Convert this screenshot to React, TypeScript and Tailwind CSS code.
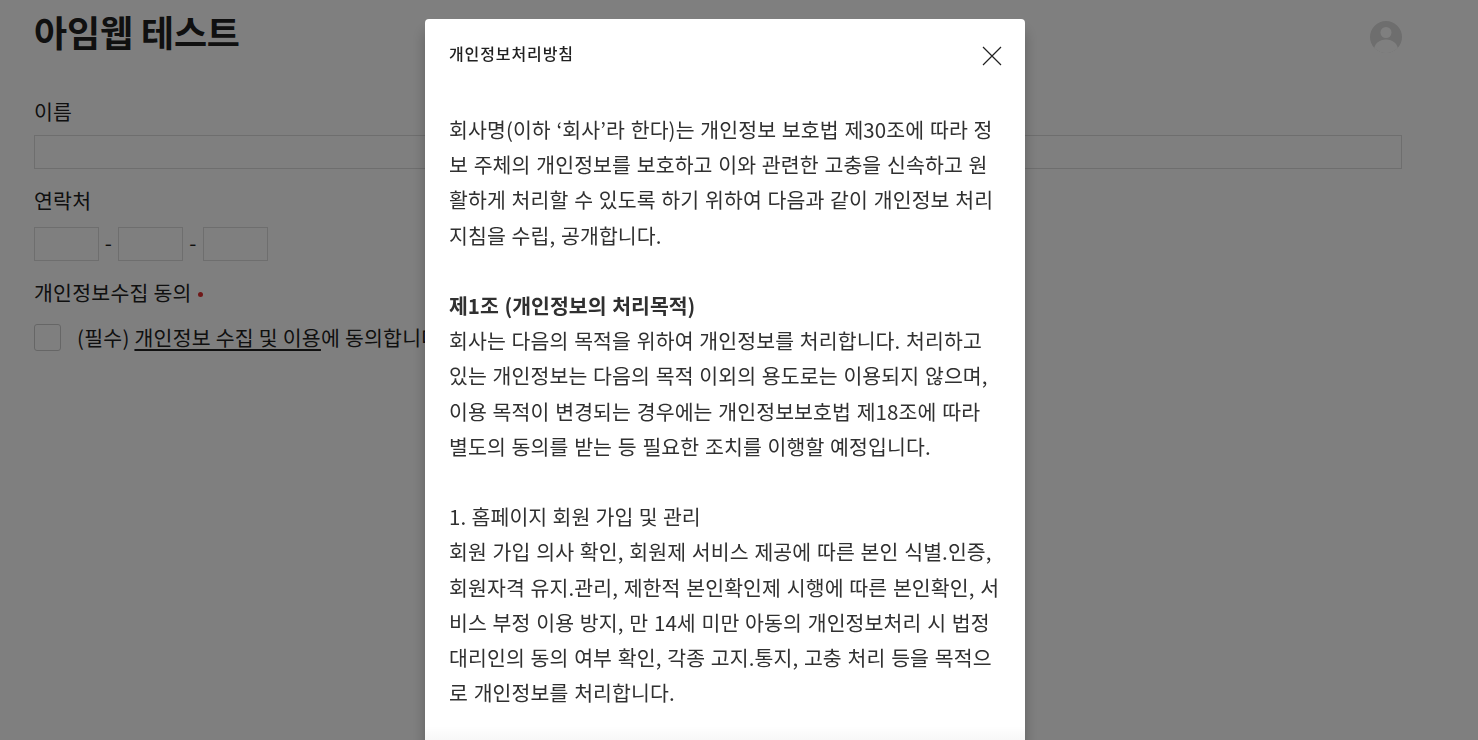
const FONT = "font-['Noto_Sans_CJK_KR','Noto_Sans',sans-serif]";

function Avatar() {
	return (
		<svg className="size-8" viewBox="0 0 32 32">
			<defs>
				<clipPath id="avatar-clip">
					<circle cx="16" cy="16" r="16" />
				</clipPath>
			</defs>
			<g clipPath="url(#avatar-clip)">
				<rect fill="#dcdcdc" height="32" width="32" />
				<circle cx="16" cy="11.5" fill="#fff" r="5.5" />
				<ellipse cx="16" cy="29" fill="#fff" rx="12" ry="10.5" />
			</g>
		</svg>
	);
}

function TextBox({ className }: { className: string }) {
	return <div className={`h-[34px] border border-[#dddddd] ${className}`} />;
}

function BackgroundPage() {
	return (
		<div className="pt-[6px] pr-[76px] pl-[34px] text-[#212121]">
			<header className="flex h-[50px] items-start justify-between">
				<h1 className="text-[36px] leading-[50px] font-bold tracking-[-0.15px]">
					아임웹 테스트
				</h1>
				<div className="pt-[15px]">
					<Avatar />
				</div>
			</header>
			<form className="pt-[40px] text-[20.5px] tracking-[0.25px]">
				<label className="block leading-[30px]">이름</label>
				<TextBox className="mt-[9px] w-full" />
				<label className="mt-[16px] block leading-[30px]">연락처</label>
				<div className="mt-[12px] flex items-center">
					<TextBox className="w-[65px]" />
					<span className="mb-[4px] w-[19px] text-center leading-none">-</span>
					<TextBox className="w-[65px]" />
					<span className="mb-[4px] w-[20px] text-center leading-none">-</span>
					<TextBox className="w-[65px]" />
				</div>
				<div className="mt-[16px] flex items-center leading-[30px]">
					개인정보수집 동의
					<span className="mt-[4px] ml-[6px] size-[5px] rounded-full bg-[#e03131]" />
				</div>
				<div className="mt-[16px] flex items-center">
					<div className="size-[27px] rounded-[3px] border border-[#cccccc]" />
					<p className="ml-[16px] leading-[28px] whitespace-nowrap">
						(필수){" "}
						<span className="underline decoration-2 underline-offset-[3px] [text-decoration-skip-ink:none]">
							개인정보 수집 및 이용
						</span>
						에 동의합니다.
					</p>
				</div>
			</form>
		</div>
	);
}

function CloseIcon() {
	return (
		<svg className="size-[20px]" fill="none" stroke="#212121" strokeWidth="1.2" viewBox="0 0 20 20">
			<path d="M1 1 L19 19 M19 1 L1 19" />
		</svg>
	);
}

function PolicyModal() {
	return (
		<div className="fixed inset-0 bg-black/50">
			<div className="relative mt-[19px] ml-[425px] h-[721px] w-[600px] overflow-hidden rounded-t-[4px] bg-white text-[#303030] shadow-[0_12px_14px_rgba(0,0,0,0.25)]">
				<div className="flex items-start justify-between pt-[22px] pr-[23px] pl-[24px]">
					<h2 className="text-[16px] leading-[24px] font-medium tracking-[0.9px] text-[#212121]">
						개인정보처리방침
					</h2>
					<div className="pt-[5px]">
						<CloseIcon />
					</div>
				</div>
				<div className="px-[24px] pt-[46px] text-[20.5px] leading-[35.2px] tracking-[0.1px] whitespace-nowrap [word-spacing:1px]">
					<p>
						회사명(이하 ‘회사’라 한다)는 개인정보 보호법 제30조에 따라 정
						<br />
						보 주체의 개인정보를 보호하고 이와 관련한 고충을 신속하고 원
						<br />
						활하게 처리할 수 있도록 하기 위하여 다음과 같이 개인정보 처리
						<br />
						지침을 수립, 공개합니다.
					</p>
					<p className="mt-[35.2px] font-bold tracking-[0px]">
						제1조 (개인정보의 처리목적)
					</p>
					<p>
						회사는 다음의 목적을 위하여 개인정보를 처리합니다. 처리하고
						<br />
						있는 개인정보는 다음의 목적 이외의 용도로는 이용되지 않으며,
						<br />
						이용 목적이 변경되는 경우에는 개인정보보호법 제18조에 따라
						<br />
						별도의 동의를 받는 등 필요한 조치를 이행할 예정입니다.
					</p>
					<p className="mt-[35.2px] [word-spacing:0.5px]">
						1. 홈페이지 회원 가입 및 관리
					</p>
					<p>
						회원 가입 의사 확인, 회원제 서비스 제공에 따른 본인 식별.인증,
						<br />
						회원자격 유지.관리, 제한적 본인확인제 시행에 따른 본인확인, 서
						<br />
						비스 부정 이용 방지, 만 14세 미만 아동의 개인정보처리 시 법정
						<br />
						대리인의 동의 여부 확인, 각종 고지.통지, 고충 처리 등을 목적으
						<br />로 개인정보를 처리합니다.
					</p>
				</div>
				<div className="absolute inset-x-0 bottom-0 h-[14px] bg-gradient-to-b from-transparent to-black/[0.03]" />
			</div>
		</div>
	);
}

export default function App() {
	return (
		<div className={`h-[740px] overflow-hidden bg-white ${FONT}`}>
			<BackgroundPage />
			<PolicyModal />
		</div>
	);
}
